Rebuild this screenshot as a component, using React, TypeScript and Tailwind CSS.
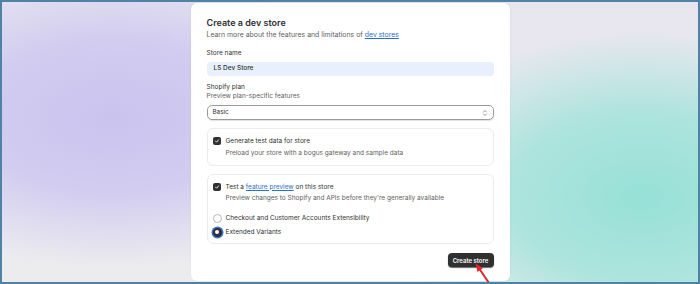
import React from "react";

const Check = () => (
  <span className="w-[8px] h-[8px] rounded-[2px] bg-[#303030] flex items-center justify-center shrink-0">
    <svg width="6" height="6" viewBox="0 0 10 10" fill="none">
      <path d="M2.5 5.2l1.8 1.8 3.4-4" stroke="#fff" strokeWidth="1.5" strokeLinecap="round" strokeLinejoin="round" />
    </svg>
  </span>
);

const Radio = ({ checked }: { checked?: boolean }) =>
  checked ? (
    <span className="w-[9px] h-[9px] rounded-full bg-[#303030] ring-[1.5px] ring-[#3b6fd0] flex items-center justify-center shrink-0">
      <span className="w-[3.5px] h-[3.5px] rounded-full bg-white" />
    </span>
  ) : (
    <span className="w-[9px] h-[9px] rounded-full border border-[#b5b5b5] bg-white shrink-0" />
  );

const App = () => {
  return (
    <div className="w-[700px] h-[284px] border-2 border-[#4f82a6] overflow-hidden relative font-['Inter',sans-serif] bg-[radial-gradient(ellipse_270px_150px_at_110px_115px,#cac3ef_0%,rgba(204,197,240,0.8)_50%,rgba(206,199,240,0)_100%),radial-gradient(ellipse_260px_165px_at_640px_195px,#96e1d7_0%,rgba(158,226,217,0.8)_50%,rgba(160,226,218,0)_100%),linear-gradient(180deg,#e7e6ef_0%,#ececef_100%)]">
      <div className="w-[319px] h-[278px] mx-auto mt-[1px] bg-white rounded-[6px] shadow-[0_0_2px_rgba(0,0,0,0.08)] px-[16px] pt-[14px] text-[#303030]">
        <h1 className="text-[9px] font-semibold leading-[12px]">Create a dev store</h1>
        <p className="text-[6.9px] text-[#616161] mt-[1px] leading-[9px]">
          Learn more about the features and limitations of{" "}
          <span className="text-[#2c6ecb] underline">dev stores</span>
        </p>

        <div className="text-[6.5px] mt-[10px] leading-[9px]">Store name</div>
        <div className="mt-[4px] h-[14px] rounded-[4px] bg-[#e8f0fe] flex items-center px-[7px] text-[6.5px] font-medium">
          LS Dev Store
        </div>

        <div className="text-[6.5px] mt-[7px] leading-[9px]">Shopify plan</div>
        <div className="text-[6.5px] text-[#616161] leading-[9px]">Preview plan-specific features</div>
        <div className="mt-[4px] h-[15px] rounded-[5px] border border-[#9a9a9a] shadow-[0_1px_1px_rgba(0,0,0,0.12)] flex items-center justify-between px-[5px] text-[6.3px]">
          <span>Basic</span>
          <svg width="6" height="8" viewBox="0 0 6 8" fill="none">
            <path d="M1.5 3l1.5-1.5L4.5 3M1.5 5L3 6.5 4.5 5" stroke="#8a8a8a" strokeWidth="0.9" strokeLinecap="round" strokeLinejoin="round" />
          </svg>
        </div>

        <div className="mt-[8px] h-[38px] rounded-[6px] border border-[#ececec] pl-[5px] pt-[7.5px]">
          <div className="flex items-center gap-[5px] text-[6.5px] leading-[9px]">
            <Check />
            <span>Generate test data for store</span>
          </div>
          <div className="pl-[13px] mt-[3px] text-[6.5px] text-[#616161] leading-[9px]">
            Preload your store with a bogus gateway and sample data
          </div>
        </div>

        <div className="mt-[8px] h-[70px] rounded-[6px] border border-[#ececec] pl-[5px] pt-[7.5px]">
          <div className="flex items-center gap-[5px] text-[6.5px] leading-[9px]">
            <Check />
            <span>
              Test a <span className="text-[#2c6ecb] underline">feature preview</span> on this store
            </span>
          </div>
          <div className="pl-[13px] mt-[2px] text-[6.5px] text-[#616161] leading-[9px]">
            Preview changes to Shopify and APIs before they're generally available
          </div>
          <div className="mt-[11px] flex items-center gap-[4px] text-[6.5px] leading-[9px]">
            <Radio />
            <span>Checkout and Customer Accounts Extensibility</span>
          </div>
          <div className="mt-[5px] flex items-center gap-[4px] text-[6.5px] leading-[9px]">
            <Radio checked />
            <span>Extended Variants</span>
          </div>
        </div>

        <div className="flex justify-end mt-[9px]">
          <button className="h-[14px] w-[46px] rounded-[4px] bg-[#303030] text-white text-[6px] font-semibold shadow-[0_1px_1px_rgba(0,0,0,0.6)]">
            Create store
          </button>
        </div>
      </div>

      {/* red pointer arrow */}
      <svg className="absolute left-[469px] top-[259px]" width="24" height="26" viewBox="0 0 24 26" fill="none">
        <path d="M8.5 8L20 25" stroke="#e2262b" strokeWidth="2" strokeLinecap="round" />
        <path d="M4.5 2.5l7.5 4.5-5.5 4z" fill="#e2262b" />
      </svg>
    </div>
  );
};

export default App;
